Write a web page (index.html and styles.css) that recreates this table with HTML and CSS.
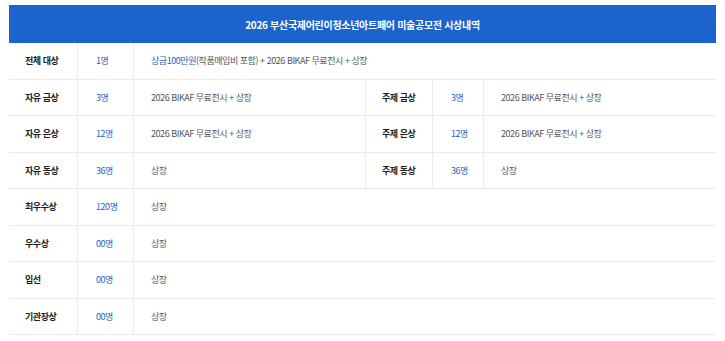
FILE: index.html
```html
<!DOCTYPE html>
<html lang="ko">
<head>
<meta charset="utf-8">
<link rel="stylesheet" href="styles.css">
</head>
<body>
<div class="award">
  <div class="award-title">2026 부산국제어린이청소년아트페어 미술공모전 시상내역</div>
  <div class="grid">
    <div class="cell label">전체 대상</div>
    <div class="cell count">1명</div>
    <div class="cell text span-rest"><span class="hl">상금100만원</span>(작품매입비 포함) + 2026 BIKAF 무료전시 + 상장</div>

    <div class="cell label">자유 금상</div>
    <div class="cell count">3명</div>
    <div class="cell text">2026 BIKAF 무료전시 + 상장</div>
    <div class="cell label">주제 금상</div>
    <div class="cell count">3명</div>
    <div class="cell text last">2026 BIKAF 무료전시 + 상장</div>

    <div class="cell label">자유 은상</div>
    <div class="cell count">12명</div>
    <div class="cell text">2026 BIKAF 무료전시 + 상장</div>
    <div class="cell label">주제 은상</div>
    <div class="cell count">12명</div>
    <div class="cell text last">2026 BIKAF 무료전시 + 상장</div>

    <div class="cell label">자유 동상</div>
    <div class="cell count">36명</div>
    <div class="cell text">상장</div>
    <div class="cell label">주제 동상</div>
    <div class="cell count">36명</div>
    <div class="cell text last">상장</div>

    <div class="cell label">최우수상</div>
    <div class="cell count">120명</div>
    <div class="cell text span-rest">상장</div>

    <div class="cell label">우수상</div>
    <div class="cell count">00명</div>
    <div class="cell text span-rest">상장</div>

    <div class="cell label">입선</div>
    <div class="cell count">00명</div>
    <div class="cell text span-rest">상장</div>

    <div class="cell label">기관장상</div>
    <div class="cell count">00명</div>
    <div class="cell text span-rest">상장</div>
  </div>
</div>
</body>
</html>
```

FILE: styles.css
```css
* { box-sizing: border-box; }
html, body { margin: 0; padding: 0; background: #fff; }
body {
  padding: 5px 9px;
  font-family: "Noto Sans CJK KR", "Noto Sans", sans-serif;
}
.award { width: 707px; }
.award-title {
  height: 38px;
  background: #1b64cd;
  color: #fff;
  font-size: 10px;
  font-weight: 700;
  display: flex;
  align-items: center;
  justify-content: center;
  letter-spacing: -0.3px;
}
.grid {
  display: grid;
  grid-template-columns: 69px 56px 232px 67px 51px 232px;
  grid-auto-rows: 36.5px;
}
.cell {
  display: flex;
  align-items: center;
  border-bottom: 1px solid #ebebeb;
  border-right: 1px solid #ebebeb;
  font-size: 9px;
  letter-spacing: -0.45px;
  white-space: nowrap;
}
.label {
  padding-left: 16px;
  font-weight: 700;
  color: #1e1e1e;
}
.count {
  padding-left: 18px;
  color: #2b63c6;
}
.text {
  padding-left: 17px;
  color: #555;
}
.text.last, .text.span-rest { border-right: none; }
.span-rest { grid-column: 3 / -1; }
.hl { color: #2b63c6; }
```
